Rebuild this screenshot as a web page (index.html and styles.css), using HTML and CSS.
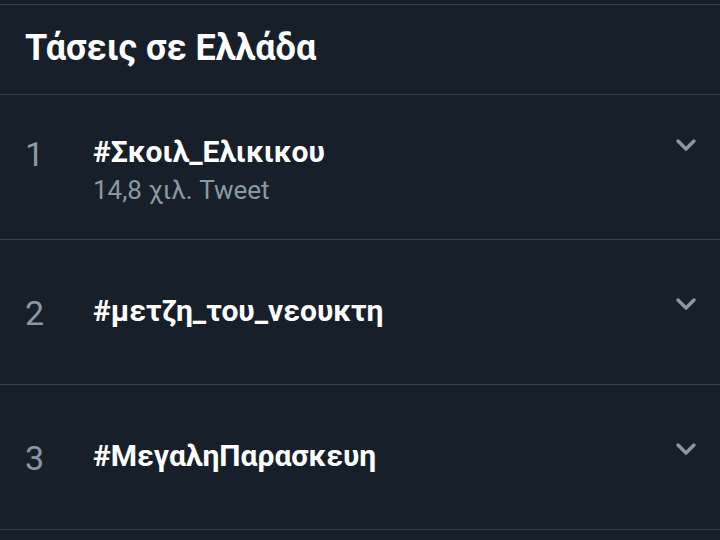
FILE: index.html
```html
<!DOCTYPE html>
<html lang="el">
<head>
<meta charset="utf-8">
<link rel="stylesheet" href="styles.css">
</head>
<body>
<div class="top"></div>
<header class="header"><h1 class="title">Τάσεις σε Ελλάδα</h1></header>
<ul class="list">
  <li class="row">
    <div class="item">
      <span class="num">1</span>
      <div class="body">
        <div class="trend">#Σκοιλ_Ελικικου</div>
        <div class="meta">14,8 χιλ. Tweet</div>
      </div>
      <svg class="chev" viewBox="0 0 22 14" width="22" height="14"><path d="M3 3 L11 11 L19 3" fill="none" stroke="currentColor" stroke-width="3.4" stroke-linecap="round" stroke-linejoin="round"/></svg>
    </div>
  </li>
  <li class="row">
    <div class="item">
      <span class="num">2</span>
      <div class="body">
        <div class="trend">#μετζη_του_νεουκτη</div>
      </div>
      <svg class="chev" viewBox="0 0 22 14" width="22" height="14"><path d="M3 3 L11 11 L19 3" fill="none" stroke="currentColor" stroke-width="3.4" stroke-linecap="round" stroke-linejoin="round"/></svg>
    </div>
  </li>
  <li class="row">
    <div class="item">
      <span class="num">3</span>
      <div class="body">
        <div class="trend">#ΜεγαληΠαρασκευη</div>
      </div>
      <svg class="chev" viewBox="0 0 22 14" width="22" height="14"><path d="M3 3 L11 11 L19 3" fill="none" stroke="currentColor" stroke-width="3.4" stroke-linecap="round" stroke-linejoin="round"/></svg>
    </div>
  </li>
</ul>
</body>
</html>
```
FILE: styles.css
```css
html, body {
  margin: 0;
  padding: 0;
  background: #17202a;
  font-family: Roboto, "Noto Sans", sans-serif;
  color: #ffffff;
  height: 540px;
  overflow: hidden;
}
.top {
  height: 4px;
  border-bottom: 1px solid #38444d;
}
.header {
  height: 90px;
  box-sizing: border-box;
  padding: 0 0 3px 25px;
  border-bottom: 1px solid #38444d;
  display: flex;
  align-items: center;
}
.title {
  margin: 0;
  font-size: 36px;
  font-weight: 700;
  line-height: 1;
}
.list {
  list-style: none;
  margin: 0;
  padding: 0;
}
.row {
  height: 144px;
  border-bottom: 1px solid #38444d;
  display: flex;
  align-items: center;
  padding: 0 24px 0 25px;
}
.item {
  flex: 1;
  display: grid;
  grid-template-columns: 68px 1fr auto;
  align-items: start;
}
.num {
  color: #8899a6;
  font-size: 34px;
  line-height: 36px;
  padding-top: 1.5px;
}
.body {
  display: flex;
  flex-direction: column;
}
.trend {
  font-size: 30px;
  font-weight: 700;
  line-height: 36px;
}
.meta {
  font-size: 26px;
  color: #8899a6;
  line-height: 20px;
  margin-top: 10px;
}
.chev {
  color: #8899a6;
  margin-top: 4px;
  margin-right: -1px;
}
```
